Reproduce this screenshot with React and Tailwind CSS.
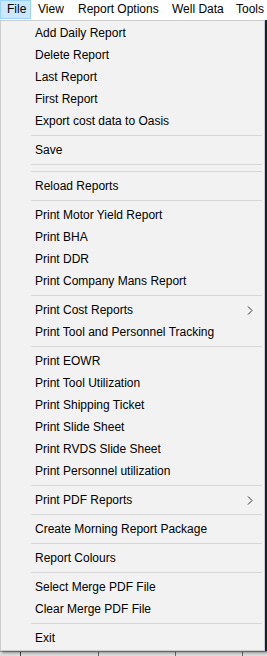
import React from 'react';

const menus = [
  { label: 'File', w: 'w-[31px]' },
  { label: 'View', w: 'w-[40px]' },
  { label: 'Report Options', w: 'w-[94px]' },
  { label: 'Well Data', w: 'w-[64px]' },
  { label: 'Tools', w: 'w-[38px]' },
];

// null = separator
const items = [
  'Add Daily Report',
  'Delete Report',
  'Last Report',
  'First Report',
  'Export cost data to Oasis',
  null,
  'Save',
  null,
  null,
  'Reload Reports',
  null,
  'Print Motor Yield Report',
  'Print BHA',
  'Print DDR',
  'Print Company Mans Report',
  null,
  { label: 'Print Cost Reports', sub: true },
  'Print Tool and Personnel Tracking',
  null,
  'Print EOWR',
  'Print Tool Utilization',
  'Print Shipping Ticket',
  'Print Slide Sheet',
  'Print RVDS Slide Sheet',
  'Print Personnel utilization',
  null,
  { label: 'Print PDF Reports', sub: true },
  null,
  'Create Morning Report Package',
  null,
  'Report Colours',
  null,
  'Select Merge PDF File',
  'Clear Merge PDF File',
  null,
  'Exit',
];

const Chevron = () => (
  <svg width="6" height="9" viewBox="0 0 6 9" className="shrink-0">
    <path d="M1 0.5 L5 4.5 L1 8.5" fill="none" stroke="#333" strokeWidth="1" />
  </svg>
);

export default function App() {
  return (
    <div className="relative w-[267px] h-[656px] overflow-hidden flex flex-col bg-[#a8a8a8] font-['Liberation_Sans',Arial,sans-serif] text-[12px] text-black">
      {/* menu bar */}
      <div className="flex h-[20px] shrink-0 bg-white overflow-hidden">
        {menus.map((m, i) => (
          <div
            key={m.label}
            className={`${m.w} shrink-0 whitespace-nowrap h-[19px] leading-[17px] pl-[6px] border ${i === 0 ? 'bg-[#cce8ff] border-[#99d1ff]' : 'border-transparent'}`}
          >
            {m.label}
          </div>
        ))}
      </div>

      {/* app content behind the menu */}
      <div className="flex-1 flex flex-col">
        <div className="flex-1 flex">
          <div className="flex-1 bg-[#f0f0f0]" />
          <div className="w-[3px] bg-[#1f2a44]" />
        </div>
        <div className="h-[5px] flex bg-[#dcdcdc] border-t border-[#9a9a9a]">
          <div className="w-[21px] border-r border-[#444]" />
          <div className="w-[78px] border-r border-[#666]" />
          <div className="w-[77px] border-r border-[#666]" />
          <div className="w-[67px] border-r border-[#666]" />
        </div>
      </div>

      {/* dropdown */}
      <div className="absolute left-0 top-[20px] w-[265px] flex flex-col bg-[#f2f2f2] border border-[#cccccc] py-px shadow-[2px_2px_2px_rgba(0,0,0,0.35)]">
        {items.map((it, i) => {
          if (it === null) {
            return (
              <div key={i} className="h-[7px] flex items-center pl-[30px] pr-[2px]">
                <div className="h-px w-full bg-[#d7d7d7]" />
              </div>
            );
          }
          const label = typeof it === 'string' ? it : it.label;
          const sub = typeof it === 'object' && it.sub;
          return (
            <div key={i} className="h-[22px] flex items-center pl-[34px] pr-[11px]">
              <span className="flex-1 whitespace-nowrap">{label}</span>
              {sub && <Chevron />}
            </div>
          );
        })}
      </div>
    </div>
  );
}
